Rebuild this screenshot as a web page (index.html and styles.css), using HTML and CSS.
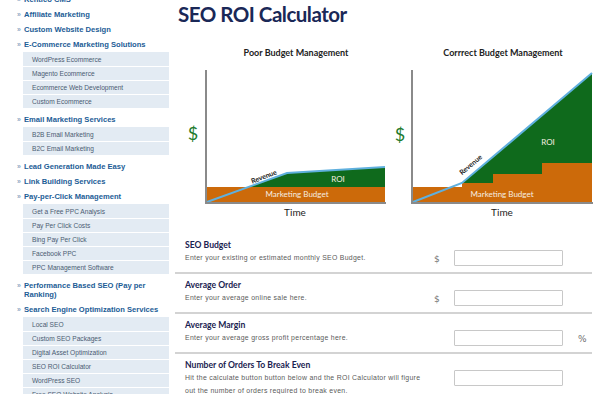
FILE: index.html
```html
<!DOCTYPE html>
<html lang="en">
<head>
<meta charset="utf-8">
<title>SEO ROI Calculator</title>
<link rel="stylesheet" href="styles.css">
</head>
<body>
<div class="page">
  <aside class="sidebar">
    <ul class="nav">
      <li class="cat"><div class="cat-head"><span class="bul">»</span><span class="cat-text">Kentico CMS</span></div></li>
      <li class="cat"><div class="cat-head"><span class="bul">»</span><span class="cat-text">Affiliate Marketing</span></div></li>
      <li class="cat"><div class="cat-head"><span class="bul">»</span><span class="cat-text">Custom Website Design</span></div></li>
      <li class="cat"><div class="cat-head"><span class="bul">»</span><span class="cat-text">E-Commerce Marketing Solutions</span></div>
        <ul class="sub">
          <li>WordPress Ecommerce</li>
          <li>Magento Ecommerce</li>
          <li>Ecommerce Web Development</li>
          <li>Custom Ecommerce</li>
        </ul>
      </li>
      <li class="cat"><div class="cat-head"><span class="bul">»</span><span class="cat-text">Email Marketing Services</span></div>
        <ul class="sub">
          <li>B2B Email Marketing</li>
          <li>B2C Email Marketing</li>
        </ul>
      </li>
      <li class="cat"><div class="cat-head"><span class="bul">»</span><span class="cat-text">Lead Generation Made Easy</span></div></li>
      <li class="cat"><div class="cat-head"><span class="bul">»</span><span class="cat-text">Link Building Services</span></div></li>
      <li class="cat"><div class="cat-head"><span class="bul">»</span><span class="cat-text">Pay-per-Click Management</span></div>
        <ul class="sub">
          <li>Get a Free PPC Analysis</li>
          <li>Pay Per Click Costs</li>
          <li>Bing Pay Per Click</li>
          <li>Facebook PPC</li>
          <li>PPC Management Software</li>
        </ul>
      </li>
      <li class="cat"><div class="cat-head"><span class="bul">»</span><span class="cat-text">Performance Based SEO (Pay per Ranking)</span></div></li>
      <li class="cat"><div class="cat-head"><span class="bul">»</span><span class="cat-text">Search Engine Optimization Services</span></div>
        <ul class="sub">
          <li>Local SEO</li>
          <li>Custom SEO Packages</li>
          <li>Digital Asset Optimization</li>
          <li>SEO ROI Calculator</li>
          <li>WordPress SEO</li>
          <li>Free SEO Website Analysis</li>
        </ul>
      </li>
    </ul>
  </aside>

  <main class="main">
    <h1 class="title">SEO ROI Calculator</h1>

    <div class="charts">
      <svg class="chart-svg" width="430" height="190" viewBox="170 38 430 190" xmlns="http://www.w3.org/2000/svg">
        <!-- Left chart -->
        <text class="c-title" x="296" y="56" text-anchor="middle">Poor Budget Management</text>
        <text class="c-dollar" x="193" y="140" text-anchor="middle">$</text>
        <rect x="207" y="187" width="178" height="15" fill="#cc6a0a"/>
        <polygon points="248,187 287,173 385,167 385,187" fill="#0f6a1c"/>
        <polyline points="207,202 287,173 385,167" fill="none" stroke="#5fb0de" stroke-width="2"/>
        <line x1="206" y1="70" x2="206" y2="204" stroke="#8a8a8a" stroke-width="2"/>
        <line x1="205" y1="203" x2="386" y2="203" stroke="#8a8a8a" stroke-width="2"/>
        <text class="c-rev" x="264" y="179" text-anchor="middle" transform="rotate(-21 264 177)">Revenue</text>
        <text class="c-in" x="338" y="182" text-anchor="middle">ROI</text>
        <text class="c-in" x="297" y="197" text-anchor="middle">Marketing Budget</text>
        <text class="c-time" x="295" y="216" text-anchor="middle">Time</text>

        <!-- Right chart -->
        <text class="c-title" x="503" y="56" text-anchor="middle">Corrrect Budget Management</text>
        <text class="c-dollar" x="400" y="141" text-anchor="middle">$</text>
        <polygon points="413,187 462,187 462,183 493,183 493,174 542,174 542,163 592,163 592,202 413,202" fill="#cc6a0a"/>
        <polygon points="462,183 592,73 592,163 542,163 542,174 493,174 493,183" fill="#0f6a1c"/>
        <polyline points="413,202 462,183 592,73" fill="none" stroke="#5fb0de" stroke-width="2"/>
        <line x1="412" y1="70" x2="412" y2="204" stroke="#8a8a8a" stroke-width="2"/>
        <line x1="411" y1="203" x2="593" y2="203" stroke="#8a8a8a" stroke-width="2"/>
        <text class="c-rev" x="471" y="167" text-anchor="middle" transform="rotate(-40 471 165)">Revenue</text>
        <text class="c-in" x="548" y="145" text-anchor="middle">ROI</text>
        <text class="c-in" x="502" y="197" text-anchor="middle">Marketing Budget</text>
        <text class="c-time" x="502" y="216" text-anchor="middle">Time</text>
      </svg>
    </div>

    <div class="form">
      <div class="row">
        <div class="info">
          <div class="label">SEO Budget</div>
          <div class="desc">Enter your existing or estimated monthly SEO Budget.</div>
        </div>
        <div class="pre">$</div>
        <div class="field"><input class="input" type="text"></div>
        <div class="post"></div>
      </div>
      <div class="row">
        <div class="info">
          <div class="label">Average Order</div>
          <div class="desc">Enter your average online sale here.</div>
        </div>
        <div class="pre">$</div>
        <div class="field"><input class="input" type="text"></div>
        <div class="post"></div>
      </div>
      <div class="row">
        <div class="info">
          <div class="label">Average Margin</div>
          <div class="desc">Enter your average gross profit percentage here.</div>
        </div>
        <div class="pre"></div>
        <div class="field"><input class="input" type="text"></div>
        <div class="post">%</div>
      </div>
      <div class="row last">
        <div class="info">
          <div class="label">Number of Orders To Break Even</div>
          <div class="desc">Hit the calculate button button below and the ROI Calculator will figure out the number of orders required to break even.</div>
        </div>
        <div class="pre"></div>
        <div class="field"><input class="input" type="text"></div>
        <div class="post"></div>
      </div>
    </div>
  </main>
</div>
</body>
</html>
```

FILE: styles.css
```css
html, body {
  margin: 0;
  padding: 0;
  background: #ffffff;
}

body {
  width: 600px;
  height: 394px;
  overflow: hidden;
  font-family: "Liberation Sans", Arial, sans-serif;
}

.page {
  display: flex;
  align-items: flex-start;
}

/* Sidebar */
.sidebar {
  width: 170px;
  flex: 0 0 170px;
}

.nav {
  list-style: none;
  margin: -8px 0 0 0;
  padding: 0;
}

.cat-head {
  display: flex;
  padding: 3px 0 3px 17px;
  line-height: 9px;
}

.bul {
  flex: 0 0 7px;
  font-size: 7px;
  color: #8ea9c4;
  font-weight: bold;
}

.cat-text {
  font-size: 7.6px;
  font-weight: bold;
  color: #1c5d96;
  width: 140px;
}

.sub {
  list-style: none;
  margin: 0 0 4px 23px;
  padding: 0;
  background: #e3ebf3;
  width: 146px;
}

.sub li {
  box-sizing: border-box;
  height: 14px;
  line-height: 13px;
  padding-left: 9px;
  font-size: 6.6px;
  color: #4a5b72;
  border-top: 1px solid #ffffff;
}

.sub li:first-child {
  border-top: 1px solid #e3ebf3;
}

/* Main */
.main {
  flex: 1 1 auto;
  width: 430px;
}

.title {
  margin: 2px 0 0 8px;
  font-family: Lato, "Open Sans", sans-serif;
  font-weight: bold;
  font-size: 20.5px;
  letter-spacing: -0.5px;
  line-height: 24px;
  color: #1a2857;
}

.charts {
  margin-top: 12px;
  height: 190px;
}

.chart-svg {
  display: block;
}

.c-title {
  font-family: Lato, sans-serif;
  font-weight: bold;
  font-size: 9px;
  fill: #222222;
}

.c-dollar {
  font-family: Lato, sans-serif;
  font-size: 18px;
  fill: #217a2c;
}

.c-rev {
  font-family: Lato, sans-serif;
  font-weight: bold;
  font-size: 7px;
  fill: #1a1a1a;
}

.c-in {
  font-family: Lato, sans-serif;
  font-size: 8px;
  fill: #f6eee2;
}

.c-time {
  font-family: Lato, sans-serif;
  font-size: 10px;
  fill: #222222;
}

/* Form */
.form {
  margin: 6px 8px 0 5px;
}

.row {
  display: grid;
  grid-template-columns: 245px 24px 109px auto;
  padding: 6px 0 8px 10px;
  border-bottom: 2px solid #d3d3d3;
  height: 24px;
}

.row.last {
  border-bottom: none;
}

.label {
  font-family: Lato, sans-serif;
  font-weight: bold;
  font-size: 8.6px;
  line-height: 11px;
  color: #1a2250;
}

.desc {
  font-size: 6.9px;
  line-height: 13px;
  color: #5a5a5a;
  letter-spacing: 0.3px;
}

.pre, .post {
  margin-top: 13px;
  font-family: "DejaVu Sans", sans-serif;
  font-size: 9px;
  line-height: 12px;
  color: #707070;
}

.pre {
  padding-left: 4px;
}

.post {
  padding-left: 15px;
}

.field {
  padding-top: 10px;
}

.input {
  box-sizing: border-box;
  display: block;
  width: 109px;
  height: 16px;
  margin: 0;
  padding: 0 3px;
  border: 1px solid #c8c8c8;
  border-radius: 1px;
  background: #ffffff;
}
```
